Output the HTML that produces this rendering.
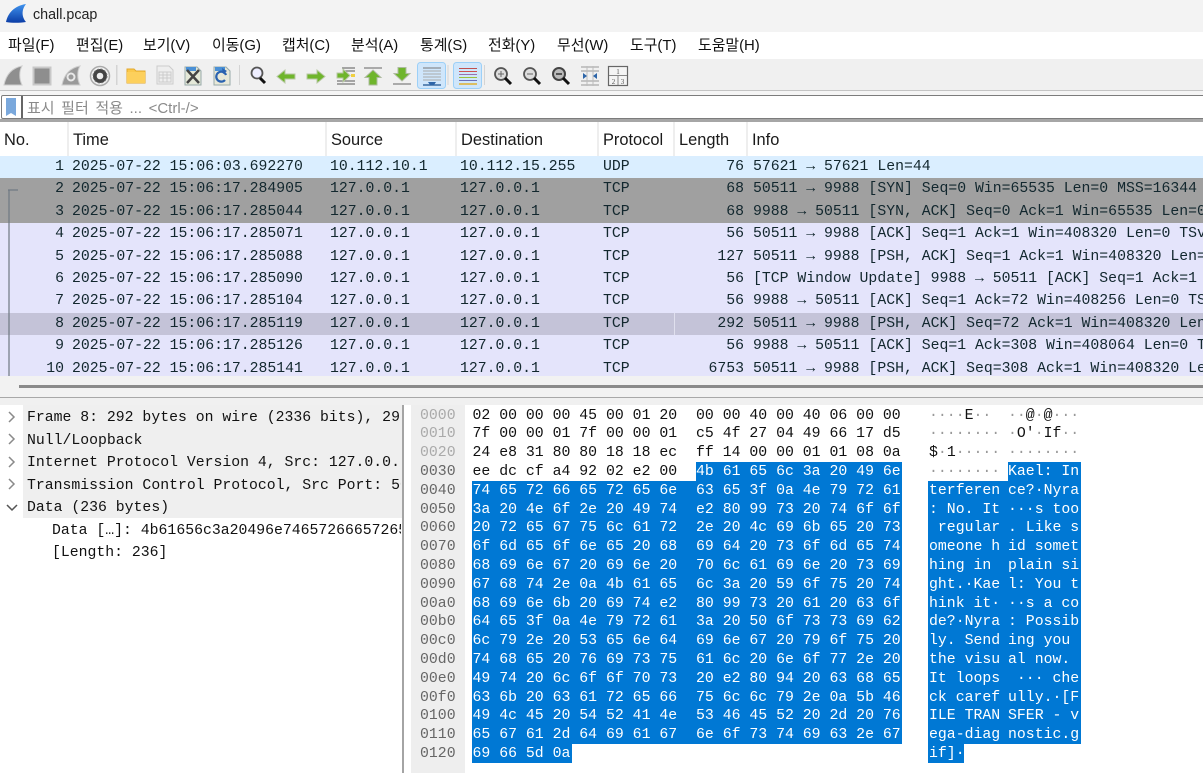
<!DOCTYPE html>
<html lang="ko"><head><meta charset="utf-8"><title>chall.pcap</title>
<style>
html,body{margin:0;padding:0;background:#fff}
#r{position:relative;width:1203px;height:773px;overflow:hidden;background:#fff;font-family:"Liberation Sans","Noto Sans CJK KR",sans-serif}
#r div{position:absolute}
.m{top:37px;font-size:14.9px;line-height:19px;color:#111;white-space:nowrap}
.h{top:130px;font-size:16.4px;line-height:20px;color:#1a1a1a}
.s{top:122px;width:2px;height:34px;background:#eeeeee}
.p{left:0;width:1203px;height:22.4px;font:14.8px/21px "Liberation Mono",monospace;color:#12272e;white-space:pre;overflow:hidden}
.p span{position:absolute;top:1px}
.n{right:1139px;text-align:right}.t{left:72px}.c{left:330px}.d{left:460px}.l{right:459px;text-align:right}.f{left:603px}.i{left:753px;width:460px;overflow:hidden}
.u{background:#daeeff}.g{background:#a0a0a0}.v{background:#e4e4fb}.w{background:#c4c3d8}
.x{left:0;width:401px;height:22.5px;font:14.8px/22px "Liberation Mono",monospace;color:#111;white-space:pre;overflow:hidden}
#r .x div{top:1px}
.y{left:0;width:1203px;height:18.8px;font:14.83px/18.8px "Liberation Mono",monospace;color:#111;white-space:pre}
.y span{position:absolute;top:1px}
.o{left:420px;color:#666}.oo{color:#aaa}
.a{left:472.5px}.b{left:696px}.e{left:929px}.j{left:1008px}
.q{color:#999}.z{color:#fff}.z .q{color:#eef}
.sl{background:#0078d4;height:18.9px}
</style></head><body><div id="r">

<div style="left:0;top:0;width:1203px;height:32px;background:#f3f3f3"></div>
<svg style="position:absolute;left:0;top:0" width="30" height="26" viewBox="0 0 30 26"><defs><linearGradient id="sh" x1="0" y1="0" x2="0" y2="1"><stop offset="0" stop-color="#3f93ee"/><stop offset="1" stop-color="#0b3da6"/></linearGradient></defs><path d="M6 22C8 13 14 6 26 4C22 9 21 16 26 22C19 23 12 23 6 22Z" fill="url(#sh)"/></svg>
<div style="left:33px;top:6px;font-size:14.3px;line-height:18px;color:#222">chall.pcap</div>

<div class="m" style="left:8px">파일(F)</div>
<div class="m" style="left:76px">편집(E)</div>
<div class="m" style="left:143px">보기(V)</div>
<div class="m" style="left:212px">이동(G)</div>
<div class="m" style="left:282px">캡처(C)</div>
<div class="m" style="left:351px">분석(A)</div>
<div class="m" style="left:420px">통계(S)</div>
<div class="m" style="left:488px">전화(Y)</div>
<div class="m" style="left:557px">무선(W)</div>
<div class="m" style="left:630px">도구(T)</div>
<div class="m" style="left:698px">도움말(H)</div>

<div style="left:0;top:59px;width:1203px;height:31px;background:#f0f0f0"></div>
<div style="left:0;top:90px;width:1203px;height:1px;background:#c4c4c4"></div>
<div style="left:0;top:91px;width:1203px;height:4px;background:#f5f5f5"></div>

<svg style="position:absolute;left:0;top:59px" width="640" height="31" viewBox="0 59 640 31">
<g>
<path d="M4 85C6 75 12 68 22 66C19 71 19 79 22 85Z" fill="#8f8f8f" stroke="#cdcdcd"/>
<rect x="33.500" y="67.500" width="17" height="17" fill="#8e8e8e" stroke="#c8c8c8" stroke-width="2"/>
<path d="M62 85C64 75 69 68 80 66C77 71 77 79 80 85Z" fill="#9a9a9a" stroke="#cdcdcd"/><circle cx="71" cy="77" r="3.500" fill="none" stroke="#e8e8e8" stroke-width="2"/>
<circle cx="100" cy="76" r="9.500" fill="#f4f4f4" stroke="#aaa" stroke-width="1.500"/><circle cx="100" cy="76" r="7" fill="#444"/><circle cx="100" cy="76" r="3.300" fill="#eee"/><circle cx="100" cy="76" r="7" fill="none" stroke="#777" stroke-dasharray="2 1.700"/>
<rect x="116" y="65" width="1.500" height="20" fill="#d4d4d4"/>
<path d="M127 69h7l2 2h9v12h-18Z" fill="#fbc94c" stroke="#e3a92d"/><rect x="127" y="72" width="18" height="11" fill="#fdd05c"/>
<path d="M157 66h12l4 4v14h-16Z" fill="#eee" stroke="#ccc"/><path d="M159 72h12v10h-12ZM159 75h12M159 78h12M163 72v10M167 72v10" fill="none" stroke="#ccc"/>
<path d="M185 67h12l4 4v14h-16Z" fill="#e4e8d8" stroke="#9aa"/><path d="M186 67h10v4h-10Z" fill="#4a90d6"/><path d="M187 70L199 83M199 70L187 83" stroke="#444" stroke-width="2.500"/>
<path d="M214 67h12l4 4v14h-16Z" fill="#e8e8d8" stroke="#9aa"/><path d="M215 67h10v4h-10Z" fill="#4a90d6"/><path d="M226 75a5 5 0 1 0 -1 5" fill="none" stroke="#2a62b0" stroke-width="2.200"/><path d="M222 68l5 3-4 3Z" fill="#2a62b0"/>
<rect x="239" y="65" width="1" height="20" fill="#d4d4d4"/>
<circle cx="257" cy="73" r="5.500" fill="#eef" stroke="#555" stroke-width="1.800"/><path d="M260 78L265 83" stroke="#111" stroke-width="3"/>
<path d="M277 76.500l8-6.500v4h10v5h-10v4Z" fill="#6fb52c" stroke="#b8c8a4"/>
<path d="M325 76.500l-8-6.500v4h-10v5h10v4Z" fill="#6fb52c" stroke="#b8c8a4"/>
<path d="M342 68h13M345 71h10M337 81h18M337 84h18" stroke="#777" stroke-width="1.200"/><path d="M337 73h6v-4l7 6.500-7 6.500v-4h-6Z" fill="#6fb52c" stroke="#b8c8a4"/><rect x="351" y="74" width="4" height="3" fill="#f0d040"/>
<path d="M364 68h18" stroke="#aaa" stroke-width="2"/><path d="M373 70l8 7.500h-4v7.500h-8v-7.500h-4Z" fill="#6fb52c" stroke="#aebba0"/>
<path d="M393 84h18" stroke="#aaa" stroke-width="2"/><path d="M402 81l8-7.500h-4v-6h-8v6h-4Z" fill="#6fb52c" stroke="#aebba0"/>
<rect x="417.500" y="62.500" width="28" height="26" rx="3" fill="#cfe6fb" stroke="#9cd0f8"/>
<path d="M423 68h18" stroke="#777"/><path d="M423 71h18M423 74h18M423 77h18M423 80h18" stroke="#aaa"/><path d="M423 85h18" stroke="#3a6aa0" stroke-width="1.500"/><path d="M428 82h8l-2 3h-4Z" fill="#2d65a8"/>
<rect x="447.500" y="65" width="1" height="20" fill="#d4d4d4"/>
<rect x="453.500" y="62.500" width="28" height="26" rx="3" fill="#cfe6fb" stroke="#9cd0f8"/>
<path d="M459 68.500h18" stroke="#c0504d"/><path d="M459 71.500h18" stroke="#d05050"/><path d="M459 74.500h18" stroke="#9a70b0"/><path d="M459 77.500h18" stroke="#9cc040"/><path d="M459 80.500h18" stroke="#6a70b8"/><path d="M459 84h18" stroke="#e0b030" stroke-width="1.500"/>
<rect x="484" y="65" width="1" height="20" fill="#d4d4d4"/>
<circle cx="501" cy="74" r="6" fill="#ddd" stroke="#555" stroke-width="1.800"/><path d="M498 74h6M501 71v6" stroke="#666"/><path d="M505 78L511 84" stroke="#111" stroke-width="3"/>
<circle cx="530" cy="74" r="6" fill="#ddd" stroke="#555" stroke-width="1.800"/><path d="M527 74h6" stroke="#666"/><path d="M534 78L540 84" stroke="#111" stroke-width="3"/>
<circle cx="559" cy="74" r="6" fill="#bbb" stroke="#444" stroke-width="2"/><path d="M556 74h6" stroke="#333" stroke-width="1.500"/><path d="M563 78L569 84" stroke="#111" stroke-width="3"/>
<path d="M581 67h18M581 71h18M581 81h18M581 85h18" stroke="#999"/><path d="M587 66v20M593 66v20" stroke="#bbb"/><path d="M583 73l4 3-4 3ZM597 73l-4 3 4 3Z" fill="#2d65a8"/>
<rect x="608.500" y="66.500" width="19" height="19" fill="#f4f4f4" stroke="#666" stroke-width="1.200"/><path d="M609 75.500h18M618 76v9" stroke="#888"/>
<text x="618" y="74" font-size="7" font-family="Liberation Serif,serif" text-anchor="middle" fill="#555">1</text><text x="613.500" y="84" font-size="7" font-family="Liberation Serif,serif" text-anchor="middle" fill="#555">2</text><text x="622.500" y="84" font-size="7" font-family="Liberation Serif,serif" text-anchor="middle" fill="#555">3</text>
</g></svg>

<div style="left:1px;top:95px;width:1204px;height:24px;box-sizing:border-box;border:1px solid #7c7c7c;border-radius:2px;background:#fff"></div>
<svg style="position:absolute;left:6px;top:98px" width="11" height="19" viewBox="0 0 11 19"><path d="M0 0h10v18l-5-3-5 3Z" fill="#7aa8dc"/></svg>
<div style="left:21px;top:96px;width:1.500px;height:22px;background:#666"></div>
<div style="left:27px;top:100px;font-size:15px;line-height:18px;color:#8a8a8a;white-space:pre;word-spacing:2.4px">표시 필터 적용 ... &lt;Ctrl-/&gt;</div>
<div style="left:0;top:119px;width:1203px;height:3px;background:#a6a6a6"></div>

<div class="h" style="left:4px">No.</div><div class="s" style="left:67px"></div>
<div class="h" style="left:73px">Time</div><div class="s" style="left:325px"></div>
<div class="h" style="left:331px">Source</div><div class="s" style="left:455px"></div>
<div class="h" style="left:461px">Destination</div><div class="s" style="left:597px"></div>
<div class="h" style="left:603px">Protocol</div><div class="s" style="left:673px"></div>
<div class="h" style="left:679px">Length</div><div class="s" style="left:746px"></div>
<div class="h" style="left:752px">Info</div>

<div class="p u" style="top:156px"><span class="n">1</span><span class="t">2025-07-22 15:06:03.692270</span><span class="c">10.112.10.1</span><span class="d">10.112.15.255</span><span class="f">UDP</span><span class="l">76</span><span class="i">57621 → 57621 Len=44</span></div>
<div class="p g" style="top:178.400px"><span class="n">2</span><span class="t">2025-07-22 15:06:17.284905</span><span class="c">127.0.0.1</span><span class="d">127.0.0.1</span><span class="f">TCP</span><span class="l">68</span><span class="i">50511 → 9988 [SYN] Seq=0 Win=65535 Len=0 MSS=16344 WS=64</span></div>
<div class="p g" style="top:200.800px"><span class="n">3</span><span class="t">2025-07-22 15:06:17.285044</span><span class="c">127.0.0.1</span><span class="d">127.0.0.1</span><span class="f">TCP</span><span class="l">68</span><span class="i">9988 → 50511 [SYN, ACK] Seq=0 Ack=1 Win=65535 Len=0 MSS=16344</span></div>
<div class="p v" style="top:223.200px"><span class="n">4</span><span class="t">2025-07-22 15:06:17.285071</span><span class="c">127.0.0.1</span><span class="d">127.0.0.1</span><span class="f">TCP</span><span class="l">56</span><span class="i">50511 → 9988 [ACK] Seq=1 Ack=1 Win=408320 Len=0 TSval=1</span></div>
<div class="p v" style="top:245.600px"><span class="n">5</span><span class="t">2025-07-22 15:06:17.285088</span><span class="c">127.0.0.1</span><span class="d">127.0.0.1</span><span class="f">TCP</span><span class="l">127</span><span class="i">50511 → 9988 [PSH, ACK] Seq=1 Ack=1 Win=408320 Len=71 TSval</span></div>
<div class="p v" style="top:268px"><span class="n">6</span><span class="t">2025-07-22 15:06:17.285090</span><span class="c">127.0.0.1</span><span class="d">127.0.0.1</span><span class="f">TCP</span><span class="l">56</span><span class="i">[TCP Window Update] 9988 → 50511 [ACK] Seq=1 Ack=1 Win=408320</span></div>
<div class="p v" style="top:290.400px"><span class="n">7</span><span class="t">2025-07-22 15:06:17.285104</span><span class="c">127.0.0.1</span><span class="d">127.0.0.1</span><span class="f">TCP</span><span class="l">56</span><span class="i">9988 → 50511 [ACK] Seq=1 Ack=72 Win=408256 Len=0 TSval=1</span></div>
<div class="p w" style="top:312.800px"><span class="n">8</span><span class="t">2025-07-22 15:06:17.285119</span><span class="c">127.0.0.1</span><span class="d">127.0.0.1</span><span class="f">TCP</span><span class="l">292</span><span class="i">50511 → 9988 [PSH, ACK] Seq=72 Ack=1 Win=408320 Len=236</span></div>
<div style="left:674px;top:313px;width:1px;height:22px;background:#e0e0ee"></div>
<div class="p v" style="top:335.200px"><span class="n">9</span><span class="t">2025-07-22 15:06:17.285126</span><span class="c">127.0.0.1</span><span class="d">127.0.0.1</span><span class="f">TCP</span><span class="l">56</span><span class="i">9988 → 50511 [ACK] Seq=1 Ack=308 Win=408064 Len=0 TSval=1</span></div>
<div class="p v" style="top:357.600px;height:18.400px"><span class="n">10</span><span class="t">2025-07-22 15:06:17.285141</span><span class="c">127.0.0.1</span><span class="d">127.0.0.1</span><span class="f">TCP</span><span class="l">6753</span><span class="i">50511 → 9988 [PSH, ACK] Seq=308 Ack=1 Win=408320 Len=6697</span></div>
<div style="left:8px;top:189px;width:10px;height:1.500px;background:rgba(110,120,130,.6)"></div>
<div style="left:8px;top:190px;width:1.500px;height:186px;background:rgba(110,120,130,.6)"></div>

<div style="left:0;top:376px;width:1203px;height:29px;background:#f2f2f2"></div>
<div style="left:19px;top:385px;width:1184px;height:3px;background:#8a8a8a"></div>
<div style="left:0;top:397px;width:1203px;height:1px;background:#a8a8a8"></div>
<div style="left:0;top:398px;width:1203px;height:7px;background:#f0f0f0"></div>

<div style="left:23px;top:405px;width:379px;height:113px;background:#efefef"></div>
<div class="x" style="top:406px"><div style="left:27px">Frame 8: 292 bytes on wire (2336 bits), 292 bytes captured</div></div>
<div class="x" style="top:428.500px"><div style="left:27px">Null/Loopback</div></div>
<div class="x" style="top:451px"><div style="left:27px">Internet Protocol Version 4, Src: 127.0.0.1, Dst: 127.0.0.1</div></div>
<div class="x" style="top:473.500px"><div style="left:27px">Transmission Control Protocol, Src Port: 50511, Dst Port</div></div>
<div class="x" style="top:496px"><div style="left:27px">Data (236 bytes)</div></div>
<div class="x" style="top:518.500px"><div style="left:52px">Data […]: 4b61656c3a20496e746572666572656e63653f0a4e</div></div>
<div class="x" style="top:541px"><div style="left:52px">[Length: 236]</div></div>
<svg style="position:absolute;left:5px;top:408px" width="14" height="110" viewBox="0 0 14 110" fill="none" stroke="#8a8a8a" stroke-width="1.500"><path d="M4 4l5 5-5 5M4 26l5 5-5 5M4 49l5 5-5 5M4 71l5 5-5 5"/><path d="M2 97l5 5 5-5" stroke="#555"/></svg>

<div style="left:402px;top:405px;width:2px;height:368px;background:#a4a4a4"></div>
<div style="left:411px;top:405px;width:54px;height:368px;background:#eeeeee"></div>

<div class="sl" style="left:696px;top:462px;width:206px"></div>
<div class="sl" style="left:472px;top:481px;width:430px;height:263px"></div>
<div class="sl" style="left:472px;top:744px;width:100px"></div>
<div class="sl" style="left:1008px;top:462px;width:73px"></div>
<div class="sl" style="left:928px;top:481px;width:153px;height:263px"></div>
<div class="sl" style="left:928px;top:744px;width:36px"></div>

<div class="y" style="top:405.600px"><span class="o oo">0000</span><span class="a">02 00 00 00 45 00 01 20</span><span class="b">00 00 40 00 40 06 00 00</span><span class="e"><span class="q" style="position:static">····</span>E<span class="q" style="position:static">··</span></span><span class="j"><span class="q" style="position:static">··</span>@<span class="q" style="position:static">·</span>@<span class="q" style="position:static">···</span></span></div>
<div class="y" style="top:424.400px"><span class="o oo">0010</span><span class="a">7f 00 00 01 7f 00 00 01</span><span class="b">c5 4f 27 04 49 66 17 d5</span><span class="e q">········</span><span class="j"><span class="q" style="position:static">·</span>O'<span class="q" style="position:static">·</span>If<span class="q" style="position:static">··</span></span></div>
<div class="y" style="top:443.200px"><span class="o oo">0020</span><span class="a">24 e8 31 80 80 18 18 ec</span><span class="b">ff 14 00 00 01 01 08 0a</span><span class="e">$<span class="q" style="position:static">·</span>1<span class="q" style="position:static">·····</span></span><span class="j q">········</span></div>
<div class="y" style="top:462px"><span class="o">0030</span><span class="a">ee dc cf a4 92 02 e2 00</span><span class="b z">4b 61 65 6c 3a 20 49 6e</span><span class="e q">········</span><span class="j z">Kael: In</span></div>
<div class="y z" style="top:480.800px"><span class="o">0040</span><span class="a">74 65 72 66 65 72 65 6e</span><span class="b">63 65 3f 0a 4e 79 72 61</span><span class="e">terferen</span><span class="j">ce?·Nyra</span></div>
<div class="y z" style="top:499.600px"><span class="o">0050</span><span class="a">3a 20 4e 6f 2e 20 49 74</span><span class="b">e2 80 99 73 20 74 6f 6f</span><span class="e">: No. It</span><span class="j">···s too</span></div>
<div class="y z" style="top:518.400px"><span class="o">0060</span><span class="a">20 72 65 67 75 6c 61 72</span><span class="b">2e 20 4c 69 6b 65 20 73</span><span class="e"> regular</span><span class="j">. Like s</span></div>
<div class="y z" style="top:537.200px"><span class="o">0070</span><span class="a">6f 6d 65 6f 6e 65 20 68</span><span class="b">69 64 20 73 6f 6d 65 74</span><span class="e">omeone h</span><span class="j">id somet</span></div>
<div class="y z" style="top:556px"><span class="o">0080</span><span class="a">68 69 6e 67 20 69 6e 20</span><span class="b">70 6c 61 69 6e 20 73 69</span><span class="e">hing in </span><span class="j">plain si</span></div>
<div class="y z" style="top:574.800px"><span class="o">0090</span><span class="a">67 68 74 2e 0a 4b 61 65</span><span class="b">6c 3a 20 59 6f 75 20 74</span><span class="e">ght.·Kae</span><span class="j">l: You t</span></div>
<div class="y z" style="top:593.600px"><span class="o">00a0</span><span class="a">68 69 6e 6b 20 69 74 e2</span><span class="b">80 99 73 20 61 20 63 6f</span><span class="e">hink it·</span><span class="j">··s a co</span></div>
<div class="y z" style="top:612.400px"><span class="o">00b0</span><span class="a">64 65 3f 0a 4e 79 72 61</span><span class="b">3a 20 50 6f 73 73 69 62</span><span class="e">de?·Nyra</span><span class="j">: Possib</span></div>
<div class="y z" style="top:631.200px"><span class="o">00c0</span><span class="a">6c 79 2e 20 53 65 6e 64</span><span class="b">69 6e 67 20 79 6f 75 20</span><span class="e">ly. Send</span><span class="j">ing you </span></div>
<div class="y z" style="top:650px"><span class="o">00d0</span><span class="a">74 68 65 20 76 69 73 75</span><span class="b">61 6c 20 6e 6f 77 2e 20</span><span class="e">the visu</span><span class="j">al now. </span></div>
<div class="y z" style="top:668.800px"><span class="o">00e0</span><span class="a">49 74 20 6c 6f 6f 70 73</span><span class="b">20 e2 80 94 20 63 68 65</span><span class="e">It loops</span><span class="j"> ··· che</span></div>
<div class="y z" style="top:687.600px"><span class="o">00f0</span><span class="a">63 6b 20 63 61 72 65 66</span><span class="b">75 6c 6c 79 2e 0a 5b 46</span><span class="e">ck caref</span><span class="j">ully.·[F</span></div>
<div class="y z" style="top:706.400px"><span class="o">0100</span><span class="a">49 4c 45 20 54 52 41 4e</span><span class="b">53 46 45 52 20 2d 20 76</span><span class="e">ILE TRAN</span><span class="j">SFER - v</span></div>
<div class="y z" style="top:725.200px"><span class="o">0110</span><span class="a">65 67 61 2d 64 69 61 67</span><span class="b">6e 6f 73 74 69 63 2e 67</span><span class="e">ega-diag</span><span class="j">nostic.g</span></div>
<div class="y z" style="top:744px"><span class="o">0120</span><span class="a">69 66 5d 0a</span><span class="e">if]·</span></div>

</div></body></html>
